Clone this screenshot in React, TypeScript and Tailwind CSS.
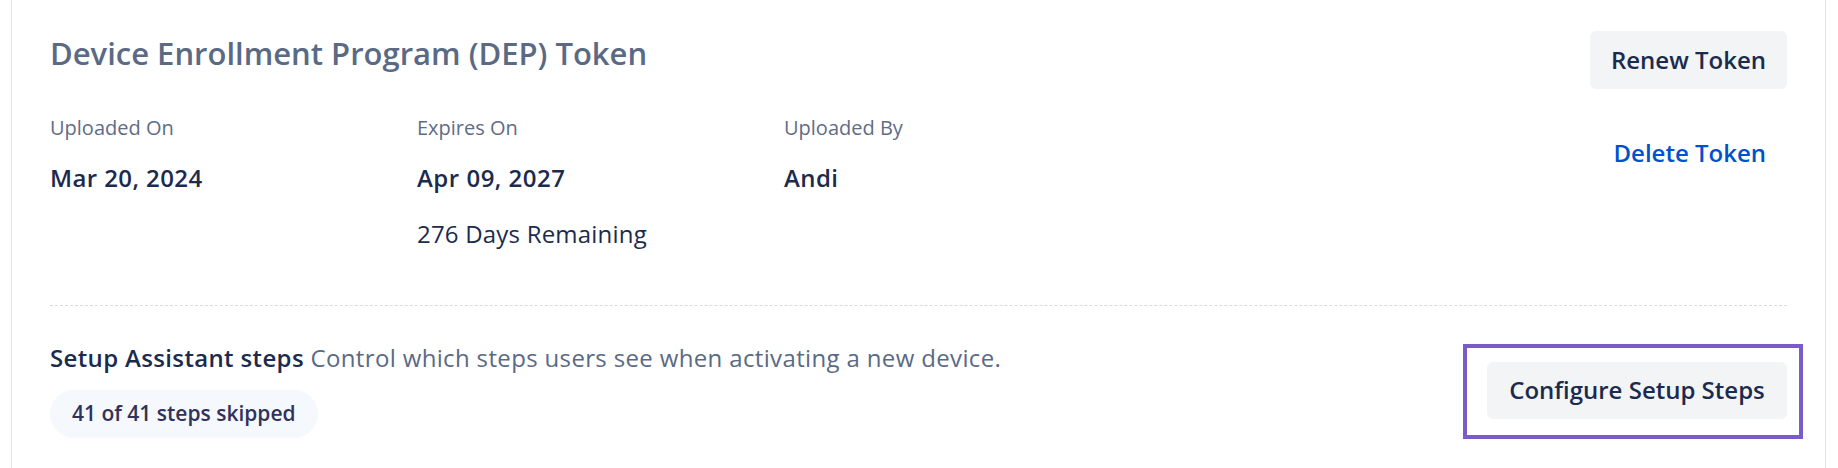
import React from "react";

export default function App() {
  return (
    <div className="w-[1838px] h-[468px] bg-white overflow-hidden pl-[11px] pr-[12px]" style={{ fontFamily: "'Open Sans', 'Noto Sans', sans-serif" }}>
      <div className="h-full border-x border-[#e3e3ea] px-[38px] pt-[31px]">
        <div className="flex items-start justify-between h-[275px] border-b border-dashed border-[#d9dce1]">
          <div className="flex flex-col">
            <h1 className="mt-[2px] text-[31px] leading-[40px] font-semibold text-[#5a6a85]">
              Device Enrollment Program (DEP) Token
            </h1>
            <div className="mt-[41px] grid grid-cols-[367px_367px_367px]">
              <div className="flex flex-col">
                <span className="text-[20px] leading-[28px] text-[#5f6c86]">Uploaded On</span>
                <span className="mt-[20px] text-[24px] leading-[32px] tracking-[0.4px] font-semibold text-[#1b2b4e]">Mar 20, 2024</span>
              </div>
              <div className="flex flex-col">
                <span className="text-[20px] leading-[28px] text-[#5f6c86]">Expires On</span>
                <span className="mt-[20px] text-[24px] leading-[32px] tracking-[0.5px] font-semibold text-[#1b2b4e]">Apr 09, 2027</span>
                <span className="mt-[24px] text-[24px] leading-[32px] tracking-[0.2px] text-[#1b2b4e]">276 Days Remaining</span>
              </div>
              <div className="flex flex-col">
                <span className="text-[20px] leading-[28px] text-[#5f6c86]">Uploaded By</span>
                <span className="mt-[20px] text-[24px] leading-[32px] tracking-[0.4px] font-semibold text-[#1b2b4e]">Andi</span>
              </div>
            </div>
          </div>
          <div className="flex flex-col items-end">
            <button className="h-[58px] px-[21px] rounded-[6px] bg-[#f3f4f6] text-[24px] font-semibold text-[#1b2b4e]">
              Renew Token
            </button>
            <button className="mt-[48px] px-[21px] text-[24px] leading-[32px] font-semibold text-[#0052cc]">
              Delete Token
            </button>
          </div>
        </div>
        <div className="flex items-center justify-between pt-[36px]">
          <div className="flex flex-col items-start">
            <p className="text-[24px] leading-[32px] tracking-[0.35px] text-[#5a6a85]">
              <span className="font-semibold text-[#1b2b4e]">Setup Assistant steps</span>{" "}
              Control which steps users see when activating a new device.
            </p>
            <span className="mt-[16px] h-[48px] flex items-center px-[22px] rounded-full bg-[#f5f8fd] text-[21px] font-semibold text-[#30325a]">
              41 of 41 steps skipped
            </span>
          </div>
          <div className="relative">
            <button className="h-[57px] w-[300px] rounded-[6px] bg-[#f3f4f6] text-[24px] font-semibold text-[#1b2b4e]">
              Configure Setup Steps
            </button>
            <div className="absolute -left-[24px] -right-[16px] -top-[18px] -bottom-[20px] border-[4px] border-[#7b5cc6] pointer-events-none" />
          </div>
        </div>
      </div>
    </div>
  );
}
